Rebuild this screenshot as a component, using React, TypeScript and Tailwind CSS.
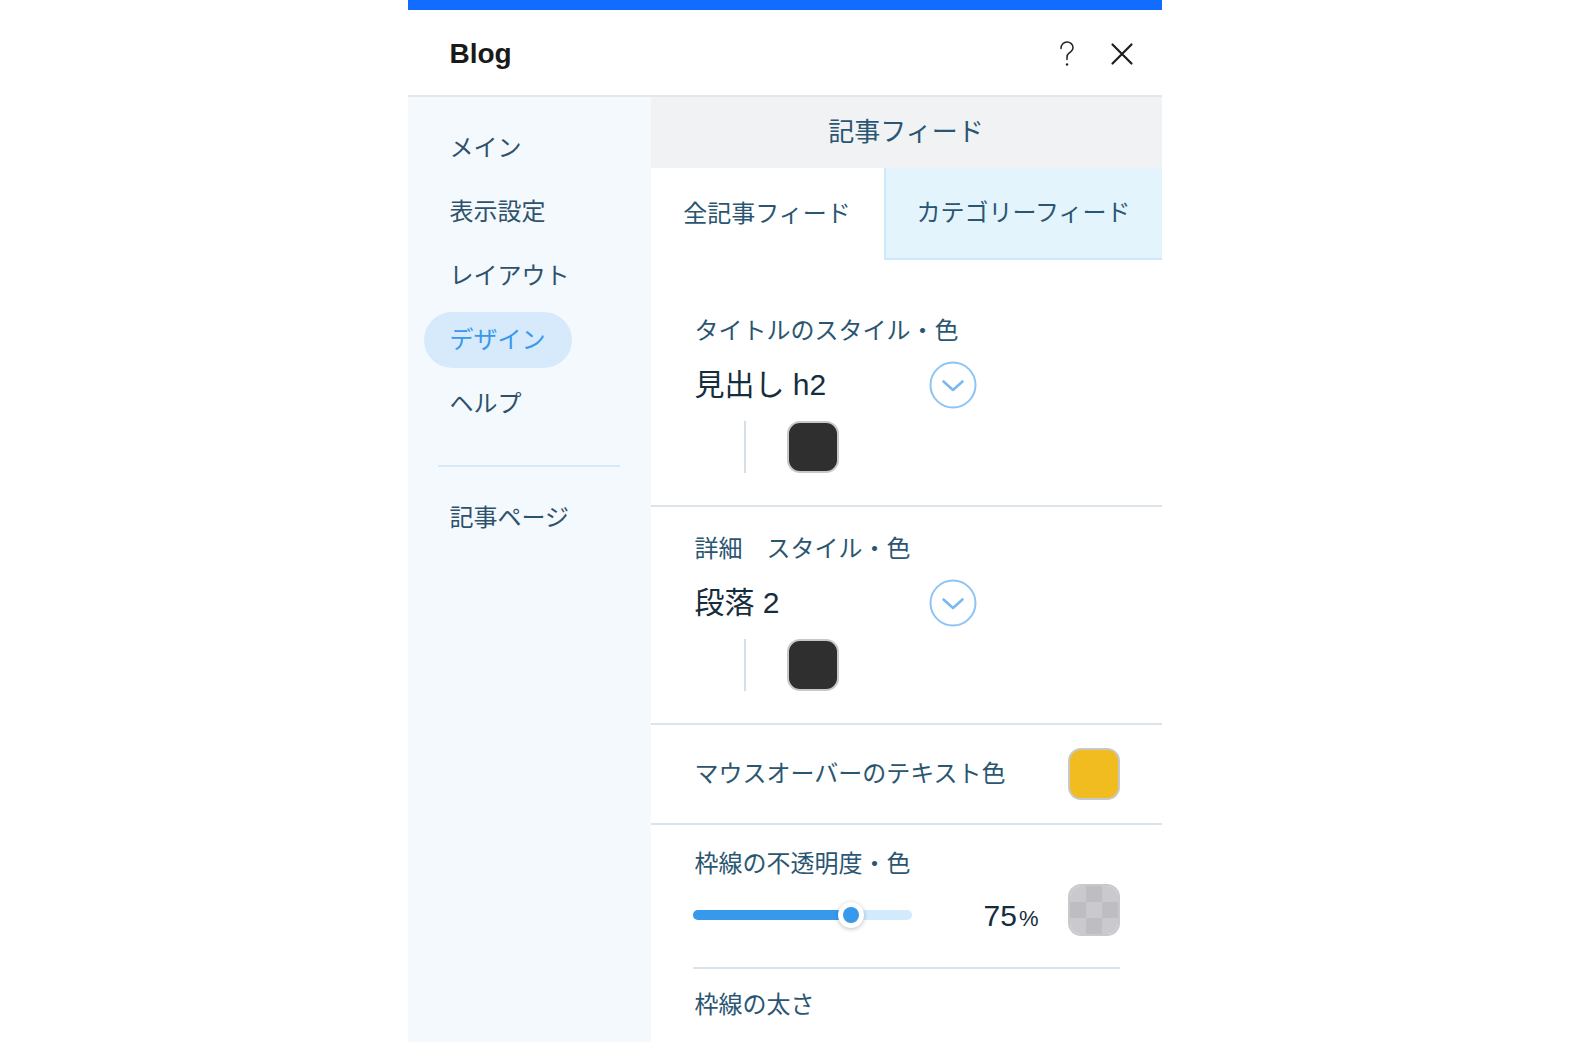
import React from "react";

const jp = { fontFamily: '"Liberation Sans", "Noto Sans CJK JP", sans-serif' };

function ChevronCircle() {
  return (
    <svg width="48" height="48" viewBox="0 0 48 48" fill="none">
      <circle cx="24" cy="24" r="22.5" stroke="#8ec4f4" strokeWidth="2" />
      <path d="M14.5 20.5 L24 29 L33.5 20.5" stroke="#7cb8ef" strokeWidth="2.6" strokeLinecap="round" strokeLinejoin="round" />
    </svg>
  );
}

function Swatch({ color }: { color: string }) {
  return <div className={`w-[52px] h-[52px] rounded-[13px] border-2 border-[#c8c8c8] ${color}`} />;
}

function CheckerSwatch() {
  const cells = [0, 1, 0, 1, 0, 1, 0, 1, 0];
  return (
    <div className="w-[52px] h-[52px] rounded-[13px] border-2 border-[#c9c9cc] overflow-hidden grid grid-cols-3 grid-rows-3">
      {cells.map((c, i) => (
        <div key={i} className={c ? "bg-[#bdbdc2]" : "bg-[#cacace]"} />
      ))}
    </div>
  );
}

function StyleSection({ label, value }: { label: string; value: string }) {
  return (
    <div className="pl-[44px] pr-[42px] pt-[26px] pb-[32px] border-b-2 border-[#dbe3eb]">
      <div className="text-[24px] leading-[32px] text-[#2b5672]">{label}</div>
      <div className="mt-[15px] flex items-center justify-between w-[282px] h-[46px]">
        <span className="text-[30px] text-[#162d3d] leading-[46px]">{value}</span>
        <ChevronCircle />
      </div>
      <div className="mt-[13px] flex items-center h-[52px]">
        <div className="ml-[49px] w-[2px] h-[52px] bg-[#d5dfe8]" />
        <div className="ml-[41px]">
          <Swatch color="bg-[#2f2f2f]" />
        </div>
      </div>
    </div>
  );
}

export default function App() {
  const nav = ["メイン", "表示設定", "レイアウト", "デザイン", "ヘルプ"];

  return (
    <div className="w-full h-screen overflow-hidden bg-white flex justify-center pr-[15px]" style={jp}>
      <div className="w-[754px] shrink-0 h-full flex flex-col bg-white overflow-hidden">
        {/* top bar */}
        <div className="h-[10px] shrink-0 bg-[#116dff]" />

        {/* header */}
        <div className="h-[87px] shrink-0 flex items-center justify-between pl-[42px] pr-[28px] pt-[3px] border-b-2 border-[#e4e6e9]">
          <span className="text-[28px] font-bold text-[#1a1a1a]" style={{ fontFamily: '"Liberation Sans", sans-serif' }}>
            Blog
          </span>
          <div className="flex items-center gap-[34px]">
            <svg width="18" height="28" viewBox="0 0 18 28" fill="none">
              <path d="M3 8.5 C3 4.5 5.8 2 9 2 C12.4 2 15 4.4 15 7.6 C15 10.6 13 11.9 11 13.2 C9.4 14.3 9 15.4 9 17.4 V19.5" stroke="#222" strokeWidth="1.5" strokeLinecap="round" />
              <circle cx="9" cy="24.5" r="1.2" fill="#222" />
            </svg>
            <svg width="24" height="24" viewBox="0 0 24 24" fill="none">
              <path d="M2.5 2.5 L21.5 21.5 M21.5 2.5 L2.5 21.5" stroke="#1d1d1d" strokeWidth="2.2" strokeLinecap="round" />
            </svg>
          </div>
        </div>

        <div className="flex flex-1 min-h-0 overflow-hidden">
          {/* sidebar */}
          <div className="w-[243px] shrink-0 bg-[#f4f9fe] pt-[23px]">
            <div className="flex flex-col gap-[8px] pl-[16px]">
              {nav.map((n) =>
                n === "デザイン" ? (
                  <div key={n} className="w-[148px] h-[56px] rounded-full bg-[#d6eafc] flex items-center pl-[26px] text-[24px] text-[#3899ec]">
                    {n}
                  </div>
                ) : (
                  <div key={n} className="h-[56px] flex items-center pl-[26px] text-[24px] text-[#2e526b]">
                    {n}
                  </div>
                )
              )}
            </div>
            <div className="ml-[30px] mt-[33px] w-[182px] h-[2px] bg-[#d6e9fb]" />
            <div className="mt-[23px] pl-[42px] h-[56px] flex items-center text-[24px] text-[#2e526b]">記事ページ</div>
          </div>

          {/* content */}
          <div className="flex-1 flex flex-col">
            <div className="h-[71px] shrink-0 bg-[#f0f2f4] flex items-center justify-center text-[26px] text-[#2b5672]">
              記事フィード
            </div>
            <div className="flex h-[92px] shrink-0">
              <div className="w-[233px] flex items-center justify-center text-[24px] text-[#2b5672] bg-white">
                全記事フィード
              </div>
              <div className="flex-1 flex items-center justify-center text-[24px] text-[#2b5672] bg-[#e4f4fd] border-l-2 border-b-2 border-[#cde8fb]">
                カテゴリーフィード
              </div>
            </div>

            <div className="pt-[29px]">
              <StyleSection label="タイトルのスタイル・色" value="見出し h2" />
            </div>
            <StyleSection label="詳細　スタイル・色" value="段落 2" />

            {/* hover color */}
            <div className="pl-[44px] pr-[42px] h-[100px] shrink-0 flex items-center justify-between border-b-2 border-[#dbe3eb]">
              <span className="text-[24px] text-[#2b5672]">マウスオーバーのテキスト色</span>
              <Swatch color="bg-[#f1bc1f]" />
            </div>

            {/* border opacity */}
            <div className="pl-[42px] pr-[42px] pt-[23px]">
              <div className="pl-[2px] text-[24px] leading-[32px] text-[#2b5672]">枠線の不透明度・色</div>
              <div className="mt-[4px] flex items-center h-[52px]">
                <div className="flex items-center flex-1 pt-[10px]">
                  <div className="relative w-[219px] h-[10px] rounded-full bg-[#d3eafc]">
                    <div className="absolute left-0 top-0 h-[10px] w-[158px] rounded-full bg-[#3899ec]" />
                    <div className="absolute left-[145px] top-[-8px] w-[26px] h-[26px] rounded-full bg-white shadow-[0_1px_4px_rgba(22,45,61,0.3)] flex items-center justify-center">
                      <div className="w-[16px] h-[16px] rounded-full bg-[#3899ec]" />
                    </div>
                  </div>
                  <div className="ml-auto flex items-baseline text-[#162d3d]" style={{ fontFamily: '"Liberation Sans", sans-serif' }}>
                    <span className="text-[30px]">75</span>
                    <span className="text-[22px] ml-[2px]">%</span>
                  </div>
                </div>
                <div className="ml-[29px]">
                  <CheckerSwatch />
                </div>
              </div>
              <div className="mt-[31px] h-[2px] bg-[#dbe3eb]" />
              <div className="mt-[20px] pl-[2px] text-[24px] leading-[32px] text-[#2b5672]">枠線の太さ</div>
            </div>
          </div>
        </div>
      </div>
    </div>
  );
}
